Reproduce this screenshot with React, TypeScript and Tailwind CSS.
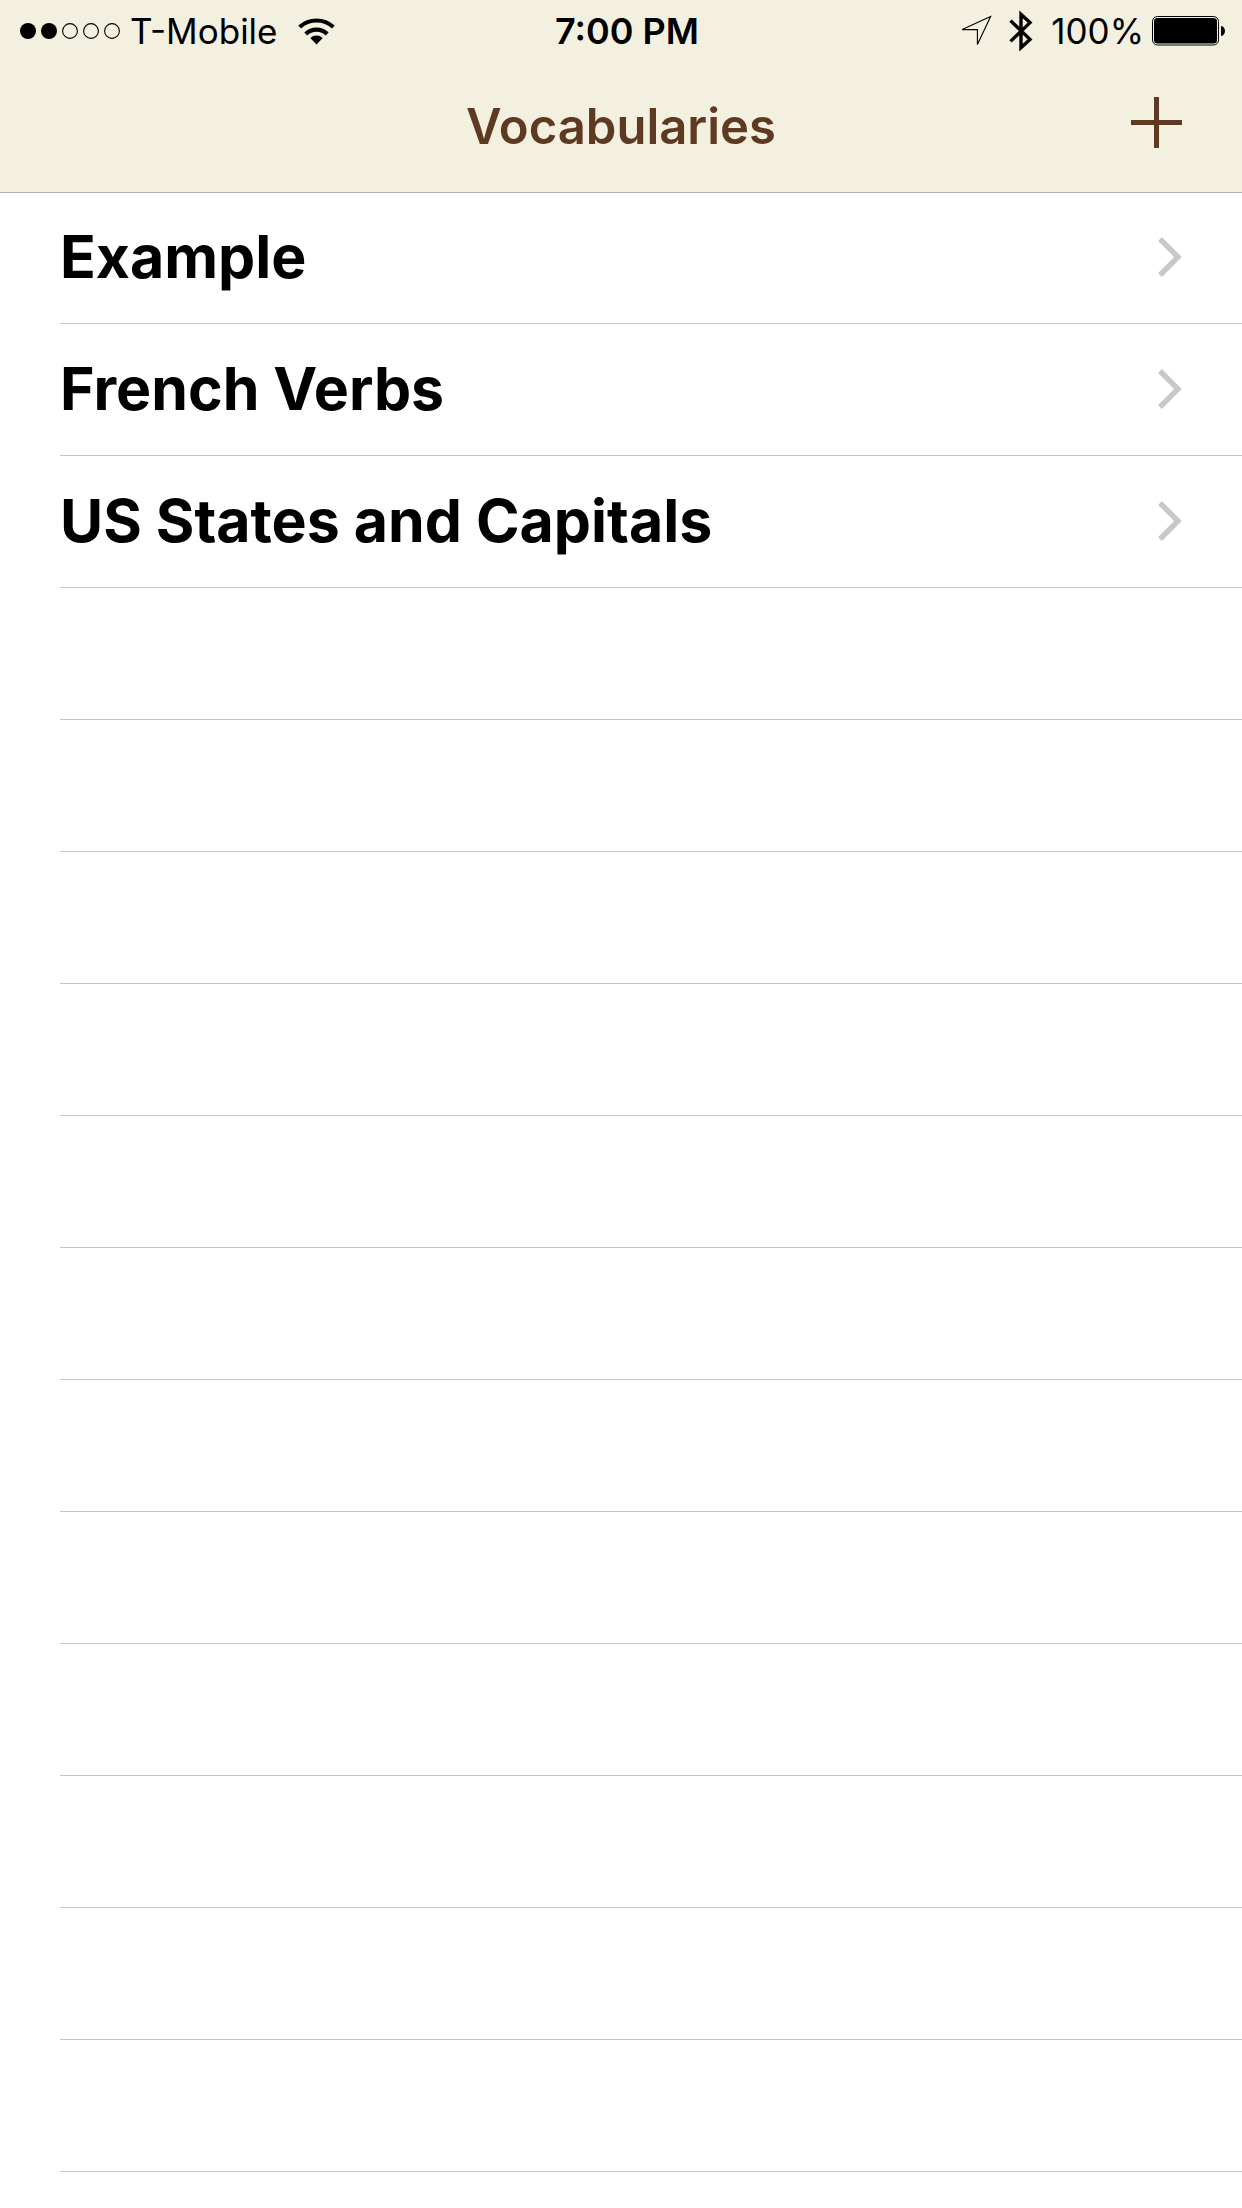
const vocabularies = ["Example", "French Verbs", "US States and Capitals"];
const emptyRows = Array.from({ length: 12 }, (_, i) => i);

function SignalDots() {
  return (
    <svg className="h-4 w-25 shrink-0" viewBox="0 0 100 16" role="img" aria-label="Signal: 2 of 5">
      <circle cx="8" cy="8" r="8" />
      <circle cx="29" cy="8" r="8" />
      <g fill="none" stroke="black" strokeWidth="1.1">
        <circle cx="50" cy="8" r="7.4" />
        <circle cx="71" cy="8" r="7.4" />
        <circle cx="92" cy="8" r="7.4" />
      </g>
    </svg>
  );
}

function Wifi() {
  return (
    <svg className="ml-5 h-7 w-[37px] shrink-0" viewBox="0 0 37 28" role="img" aria-label="Wi-Fi">
      <path d="M18.5 27.5 L12.3 20.9 A9 9 0 0 1 24.7 20.9 Z" />
      <g fill="none" stroke="black" strokeWidth="4.2">
        <path d="M7.8 16.9 A15.4 15.4 0 0 1 29.2 16.9" />
        <path d="M1.7 10 A24.9 24.9 0 0 1 35.3 10" />
      </g>
    </svg>
  );
}

function LocationArrow() {
  return (
    <svg className="h-8 w-[31px] shrink-0" viewBox="0 0 31 32" role="img" aria-label="Location">
      <path d="M29.6 1.6 L1.2 14.6 H16.4 V29.4 Z" fill="none" stroke="black" strokeWidth="1.1" />
    </svg>
  );
}

function Bluetooth() {
  return (
    <svg className="ml-[17px] h-[42px] w-6 shrink-0" viewBox="0 0 24 42" role="img" aria-label="Bluetooth">
      <path
        d="M1.5 10.6 L21 29.4 L12 37.6 V4.4 L21 12.6 L1.5 31.4"
        fill="none"
        stroke="black"
        strokeWidth="3.4"
        strokeMiterlimit="10"
      />
    </svg>
  );
}

function Battery() {
  return (
    <svg className="ml-2 h-[30px] w-[74px] shrink-0" viewBox="0 0 74 30" role="img" aria-label="Battery full">
      <rect x="0.5" y="0.5" width="66" height="28.5" rx="5" fill="none" stroke="black" />
      <rect x="2" y="2" width="63" height="25.5" rx="3.5" />
      <path d="M69 10 C74.3 10.5 74.3 19.5 69 20 Z" />
    </svg>
  );
}

function Chevron() {
  return (
    <svg className="mb-0.5 h-10 w-6 shrink-0" viewBox="0 0 24 40" aria-hidden="true">
      <path d="M2 2 L20 20 L2 38" fill="none" stroke="#c7c7cc" strokeWidth="5.4" />
    </svg>
  );
}

export default function App() {
  return (
    <div className="min-h-screen bg-white font-['Inter',sans-serif] text-black">
      <header className="relative bg-[#f4f0df] shadow-[0_1px_0_#b2b2b2]">
        <div className="grid h-[62px] grid-cols-3 items-center pl-5 pr-4 text-[35px]">
          <div className="flex items-center">
            <SignalDots />
            <span className="ml-2.5 whitespace-nowrap">T-Mobile</span>
            <Wifi />
          </div>
          <time className="pl-2 text-center text-[36px] font-semibold">7:00 PM</time>
          <div className="flex items-center justify-end">
            <LocationArrow />
            <Bluetooth />
            <span className="ml-4.5">100%</span>
            <Battery />
          </div>
        </div>
        <div className="grid h-[130px] grid-cols-[1fr_auto_1fr] items-center px-15 text-[#5e3a22]">
          <h1 className="col-start-2 text-[49px] font-semibold">Vocabularies</h1>
          <button type="button" aria-label="Add vocabulary" className="justify-self-end pb-2.5">
            <svg className="block size-[51px]" viewBox="0 0 51 51" aria-hidden="true">
              <path d="M23 0 H28 V23 H51 V28 H28 V51 H23 V28 H0 V23 H23 Z" fill="currentColor" />
            </svg>
          </button>
        </div>
      </header>
      <ul className="pl-15">
        {vocabularies.map((name) => (
          <li key={name} className="border-b border-[#c4c3c8]">
            <a href="#" className="flex h-[131px] items-center justify-between pr-15 text-[59px] font-bold">
              {name}
              <Chevron />
            </a>
          </li>
        ))}
        {emptyRows.map((i) => (
          <li key={i} aria-hidden="true" className="h-33 border-b border-[#c4c3c8]" />
        ))}
      </ul>
    </div>
  );
}
